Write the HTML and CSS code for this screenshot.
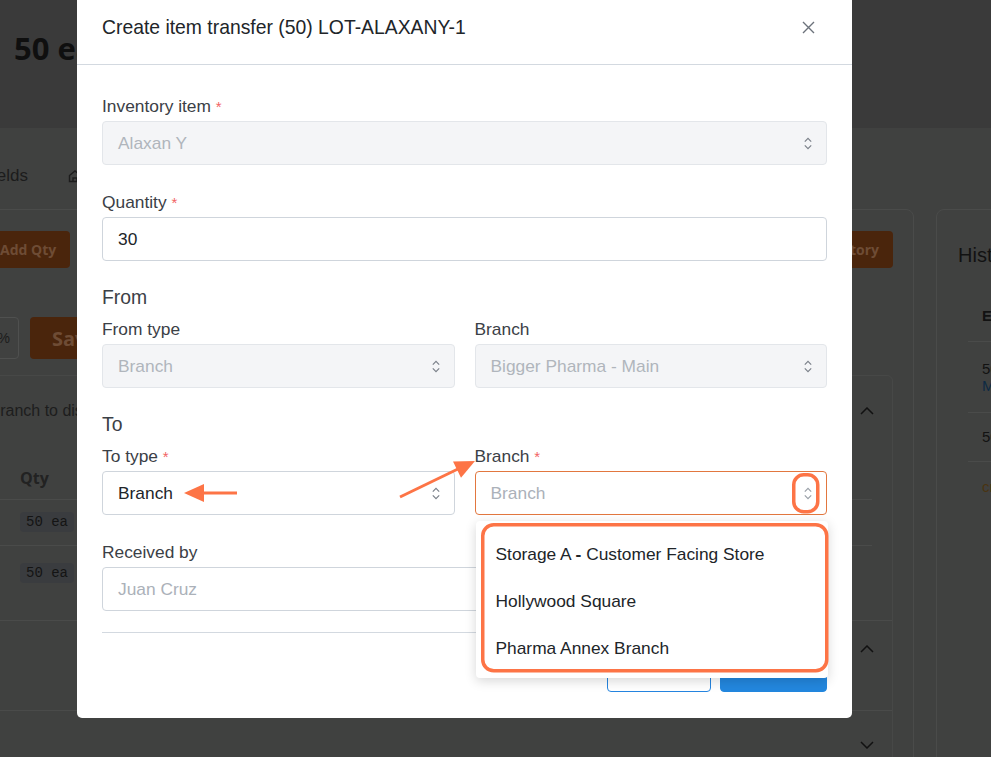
FILE: index.html
```html
<!DOCTYPE html>
<html lang="en">
<head>
<meta charset="utf-8">
<title>Create item transfer</title>
<link rel="stylesheet" href="styles.css">
</head>
<body>
<div class="page">
  <header class="page-head">
    <h1 class="page-title">50 ea Alaxan Y</h1>
  </header>
  <nav class="tabs">
    <span class="tab">Custom fields</span>
    <span class="tab">
      <svg class="tab-icon" viewBox="0 0 14 14" width="14" height="14"><path d="M1.5 6.5 7 2l5.5 4.5V12.5h-11z M5 12.5V9h4v3.5" fill="none" stroke="currentColor" stroke-width="1.4"/></svg>
      Locations
    </span>
  </nav>
  <div class="cols">
    <section class="card main-card">
      <div class="btn-row">
        <span class="bg-btn">Add Qty</span>
        <span class="bg-btn">Inventory</span>
      </div>
      <div class="btn-row2">
        <span class="bg-box">%</span>
        <span class="bg-btn big">Save</span>
      </div>
      <div class="panel">
        <div class="panel-head">
          <span>Select a branch to display stock</span>
          <svg class="bg-chev" viewBox="0 0 14 8" width="14" height="8"><path d="M1 7 7 1l6 6" fill="none" stroke="currentColor" stroke-width="1.5"/></svg>
        </div>
        <table class="bg-table">
          <thead><tr><th class="c1">Lot</th><th>Qty</th></tr></thead>
          <tbody>
            <tr class="r1"><td class="c1">A</td><td><span class="chip">50 ea</span></td></tr>
            <tr class="r2"><td class="c1">B</td><td><span class="chip">50 ea</span></td></tr>
          </tbody>
        </table>
        <div class="panel-sec sec2">
          <span>Branches</span>
          <svg class="bg-chev" viewBox="0 0 14 8" width="14" height="8"><path d="M1 7 7 1l6 6" fill="none" stroke="currentColor" stroke-width="1.5"/></svg>
        </div>
        <div class="panel-sec sec3">
          <span>Transfers</span>
          <svg class="bg-chev" viewBox="0 0 14 8" width="14" height="8"><path d="M1 1l6 6 6-6" fill="none" stroke="currentColor" stroke-width="1.5"/></svg>
        </div>
      </div>
    </section>
    <section class="card side-card">
      <h2 class="side-title">History</h2>
      <table class="hist">
        <thead><tr><th>Event</th></tr></thead>
        <tbody>
          <tr class="h1"><td>50 ea added<br><span class="blue">Main</span></td></tr>
          <tr class="h2"><td>50 ea</td></tr>
          <tr class="h3"><td><span class="orange">created</span></td></tr>
        </tbody>
      </table>
    </section>
  </div>
</div>

<div class="modal">
  <div class="modal-head">
    <h3 class="modal-title">Create item transfer (50) LOT-ALAXANY-1</h3>
    <svg class="close" viewBox="0 0 13 13" width="13" height="13"><path d="M1 1l11 11M12 1 1 12" fill="none" stroke="currentColor" stroke-width="1.4"/></svg>
  </div>
  <div class="modal-body">
    <div class="field">
      <label class="label">Inventory item <span class="req">*</span></label>
      <div class="control disabled"><span>Alaxan Y</span><svg class="chev" viewBox="0 0 8 13" width="8" height="13"><path d="M.8 4.6 4 1.4l3.2 3.2M.8 8.4 4 11.6l3.2-3.2" fill="none" stroke="currentColor" stroke-width="1.2"/></svg></div>
    </div>
    <div class="field">
      <label class="label">Quantity <span class="req">*</span></label>
      <div class="control"><span>30</span></div>
    </div>

    <h4 class="section-title">From</h4>
    <div class="row">
      <div class="field">
        <label class="label">From type</label>
        <div class="control disabled"><span>Branch</span><svg class="chev" viewBox="0 0 8 13" width="8" height="13"><path d="M.8 4.6 4 1.4l3.2 3.2M.8 8.4 4 11.6l3.2-3.2" fill="none" stroke="currentColor" stroke-width="1.2"/></svg></div>
      </div>
      <div class="field">
        <label class="label">Branch</label>
        <div class="control disabled"><span>Bigger Pharma - Main</span><svg class="chev" viewBox="0 0 8 13" width="8" height="13"><path d="M.8 4.6 4 1.4l3.2 3.2M.8 8.4 4 11.6l3.2-3.2" fill="none" stroke="currentColor" stroke-width="1.2"/></svg></div>
      </div>
    </div>

    <h4 class="section-title">To</h4>
    <div class="row">
      <div class="field">
        <label class="label">To type <span class="req">*</span></label>
        <div class="control"><span>Branch</span><svg class="chev" viewBox="0 0 8 13" width="8" height="13"><path d="M.8 4.6 4 1.4l3.2 3.2M.8 8.4 4 11.6l3.2-3.2" fill="none" stroke="currentColor" stroke-width="1.2"/></svg></div>
      </div>
      <div class="field">
        <label class="label">Branch <span class="req">*</span></label>
        <div class="select-wrap">
          <div class="control focus"><span class="placeholder">Branch</span><svg class="chev light" viewBox="0 0 8 13" width="8" height="13"><path d="M.8 4.6 4 1.4l3.2 3.2M.8 8.4 4 11.6l3.2-3.2" fill="none" stroke="currentColor" stroke-width="1.2"/></svg></div>
          <ul class="dropdown">
            <li>Storage A <span class="dash">-</span> Customer Facing Store</li>
            <li>Hollywood Square</li>
            <li>Pharma Annex Branch</li>
          </ul>
        </div>
      </div>
    </div>

    <div class="field last">
      <label class="label">Received by</label>
      <div class="control"><span class="placeholder">Juan Cruz</span></div>
    </div>
  </div>
  <div class="modal-foot">
    <button class="btn btn-outline">Cancel</button>
    <button class="btn btn-primary">Transfer</button>
  </div>
</div>

<svg class="annot" viewBox="0 0 991 757" width="991" height="757">
  <g fill="#fd7446" stroke="none">
    <rect x="202" y="491.5" width="35" height="3"/>
    <polygon points="184,493 204,484 204,502"/>
    <line x1="400" y1="497" x2="460" y2="468" stroke="#fd7446" stroke-width="3"/>
    <polygon points="475,461 453,461.6 461,477.8"/>
  </g>
  <g fill="none" stroke="#fd7446" stroke-width="3.5">
    <rect x="793.75" y="474.75" width="24" height="37" rx="10"/>
    <rect x="482.75" y="524.75" width="344" height="146" rx="11"/>
  </g>
</svg>
</body>
</html>
```
FILE: styles.css
```css
* { box-sizing: border-box; }
html, body { margin: 0; height: 100%; }
body {
  background: #404140;
  font-family: "Liberation Sans", Arial, sans-serif;
  overflow: hidden;
  position: relative;
}

/* ---------- dimmed background page ---------- */
.page-head {
  height: 128px;
  background: #3a3a3a;
  padding: 26px 14px 0;
}
.page-title {
  margin: 0;
  font-family: "Open Sans", sans-serif;
  font-weight: 700;
  font-size: 31px;
  line-height: 44px;
  color: #0f0f0f;
  white-space: nowrap;
}
.tabs {
  display: flex;
  align-items: center;
  gap: 40px;
  height: 81px;
  padding-top: 14px;
  margin-left: -75px;
  font-size: 17px;
  color: #1c1c1c;
  white-space: nowrap;
}
.tab { display: flex; align-items: center; gap: 6px; }
.tab-icon { color: #1c1c1c; }

.cols {
  display: flex;
  gap: 22px;
  margin-left: -100px;
}
.card {
  border: 1px solid #4a4b4a;
  border-radius: 8px;
  height: 620px;
  flex: none;
}
.main-card { width: 1014px; padding: 21px 20px 0; }
.side-card { width: 300px; padding: 31px 21px 0; }

.btn-row {
  display: flex;
  justify-content: space-between;
  padding-left: 65px;
}
.bg-btn {
  height: 37px;
  padding: 0 14px;
  display: flex;
  align-items: center;
  background: #4a250c;
  color: #6e4c35;
  border-radius: 4px;
  font-family: "Open Sans", sans-serif;
  font-weight: 700;
  font-size: 14px;
}
.btn-row2 {
  display: flex;
  gap: 11px;
  margin-top: 49px;
  height: 42px;
}
.bg-box {
  width: 98px;
  border: 1px solid #4f504f;
  border-radius: 4px;
  display: flex;
  align-items: center;
  justify-content: flex-end;
  padding-right: 8px;
  color: #1c1c1c;
  font-size: 14px;
}
.bg-btn.big { height: 42px; padding: 0 22px; font-size: 20px; width: 120px; }

.panel {
  margin-top: 16px;
  border: 1px solid #474847;
  border-radius: 6px;
  color: #1d1d1d;
  font-size: 16px;
}
.panel-head {
  height: 70px;
  display: flex;
  align-items: center;
  justify-content: space-between;
  padding: 0 18px 0 7px;
}
.bg-chev { color: #111; }
.bg-table {
  margin: 11px 20px 0;
  width: calc(100% - 40px);
  border-collapse: collapse;
}
.bg-table th, .bg-table td { text-align: left; padding: 0; }
.bg-table th {
  height: 42px;
  font-family: "Open Sans", sans-serif;
  font-weight: 700;
  font-size: 16px;
  color: #222;
  border-bottom: 1px solid #4a4b4a;
}
.bg-table .c1 { width: 78px; color: transparent; }
.bg-table .r1 td { height: 46px; border-bottom: 1px solid #4a4b4a; }
.bg-table .r2 td { height: 56px; }
.chip {
  display: inline-block;
  background: #3a3c3f;
  color: #141414;
  font-family: "Liberation Mono", monospace;
  font-size: 14px;
  padding: 2px 6px;
  border-radius: 4px;
}
.panel-sec {
  display: flex;
  justify-content: space-between;
  align-items: flex-start;
  padding: 24px 18px 0 20px;
  border-top: 1px solid #4a4b4a;
  color: transparent;
}
.bg-table + .panel-sec { margin-top: 19px; }
.sec2 { height: 90px; }
.sec3 { height: 80px; padding-top: 30px; }

.side-title {
  margin: 0;
  font-weight: 400;
  font-size: 20px;
  line-height: 28px;
  color: #121212;
}
.hist {
  margin: 22px 0 0 10px;
  border-collapse: collapse;
  width: 260px;
  font-size: 15px;
  color: #121212;
}
.hist th, .hist td { text-align: left; padding: 0 14px; border-bottom: 1px solid #4a4b4a; }
.hist th { height: 50px; font-weight: 700; }
.hist .h1 td { height: 71px; }
.hist .h2 td { height: 49px; }
.hist .h3 td { height: 50px; border-bottom: 0; }
.blue { color: #0d2a44; }
.orange { color: #4a3410; }

/* ---------- modal ---------- */
.modal {
  position: fixed;
  left: 77px;
  top: 0;
  width: 775px;
  height: 718px;
  background: #fff;
  border-radius: 0 0 5px 5px;
  z-index: 5;
}
.modal-head {
  height: 65px;
  display: flex;
  align-items: center;
  justify-content: space-between;
  padding: 0 37px 10px 25px;
  border-bottom: 1px solid #d3d9e0;
}
.modal-title {
  margin: 0;
  font-weight: 400;
  font-size: 19.35px;
  line-height: 24px;
  color: #212529;
}
.close { color: #6c727b; }

.modal-body { padding: 29px 25px 0; }
.field { margin-bottom: 25px; }
.field.last { margin-bottom: 0; }
.label {
  display: block;
  height: 24px;
  overflow: visible;
  font-size: 17.35px;
  line-height: 24px;
  color: #3b4046;
  margin-bottom: 3px;
}
.req { color: #f26464; font-size: 15px; line-height: 1; }
.control {
  height: 44px;
  border: 1px solid #cfd5dc;
  border-radius: 4px;
  padding: 0 14px 0 15px;
  display: flex;
  align-items: center;
  justify-content: space-between;
  font-size: 17.35px;
  color: #212529;
  background: #fff;
}
.control.disabled {
  background: #f4f5f7;
  border-color: #e3e6ea;
  color: #b0b5bc;
}
.control.focus { border-color: #e2773f; }
.placeholder { color: #abb1b9; }
.chev { color: #7b818a; flex: none; }
.chev.light { color: #9aa0a8; }

.section-title {
  margin: -3px 0 6px;
  font-weight: 400;
  font-size: 19.35px;
  line-height: 28px;
  color: #3b4046;
}
.row {
  display: grid;
  grid-template-columns: 1fr 1fr;
  gap: 20px;
  margin-bottom: 25px;
}
.row .field { margin-bottom: 0; }

.select-wrap { position: relative; }
.dropdown {
  position: absolute;
  left: 1px;
  right: -1px;
  top: calc(100% + 6px);
  margin: 0;
  padding: 10px 0 6px;
  list-style: none;
  background: #fff;
  border-radius: 4px;
  box-shadow: 0 3px 12px rgba(0, 0, 0, 0.16);
  z-index: 3;
}
.dropdown li {
  height: 47px;
  line-height: 47px;
  padding: 0 20px;
  font-size: 17.35px;
  color: #212529;
  white-space: nowrap;
}
.dash { font-weight: 700; }

.modal-foot {
  margin: 21px 25px 0;
  padding-top: 19px;
  border-top: 1px solid #d3d9e0;
  display: flex;
  justify-content: flex-end;
  gap: 9px;
}
.btn {
  height: 40px;
  border-radius: 4px;
  font-family: "Liberation Sans", Arial, sans-serif;
  font-size: 17px;
}
.btn-outline { width: 104px; background: #fff; border: 1px solid #2585e0; color: #2585e0; }
.btn-primary { width: 107px; background: #2387de; border: 1px solid #2387de; color: #fff; }

/* annotation overlay */
.annot {
  position: fixed;
  left: 0;
  top: 0;
  z-index: 10;
  pointer-events: none;
}
```
